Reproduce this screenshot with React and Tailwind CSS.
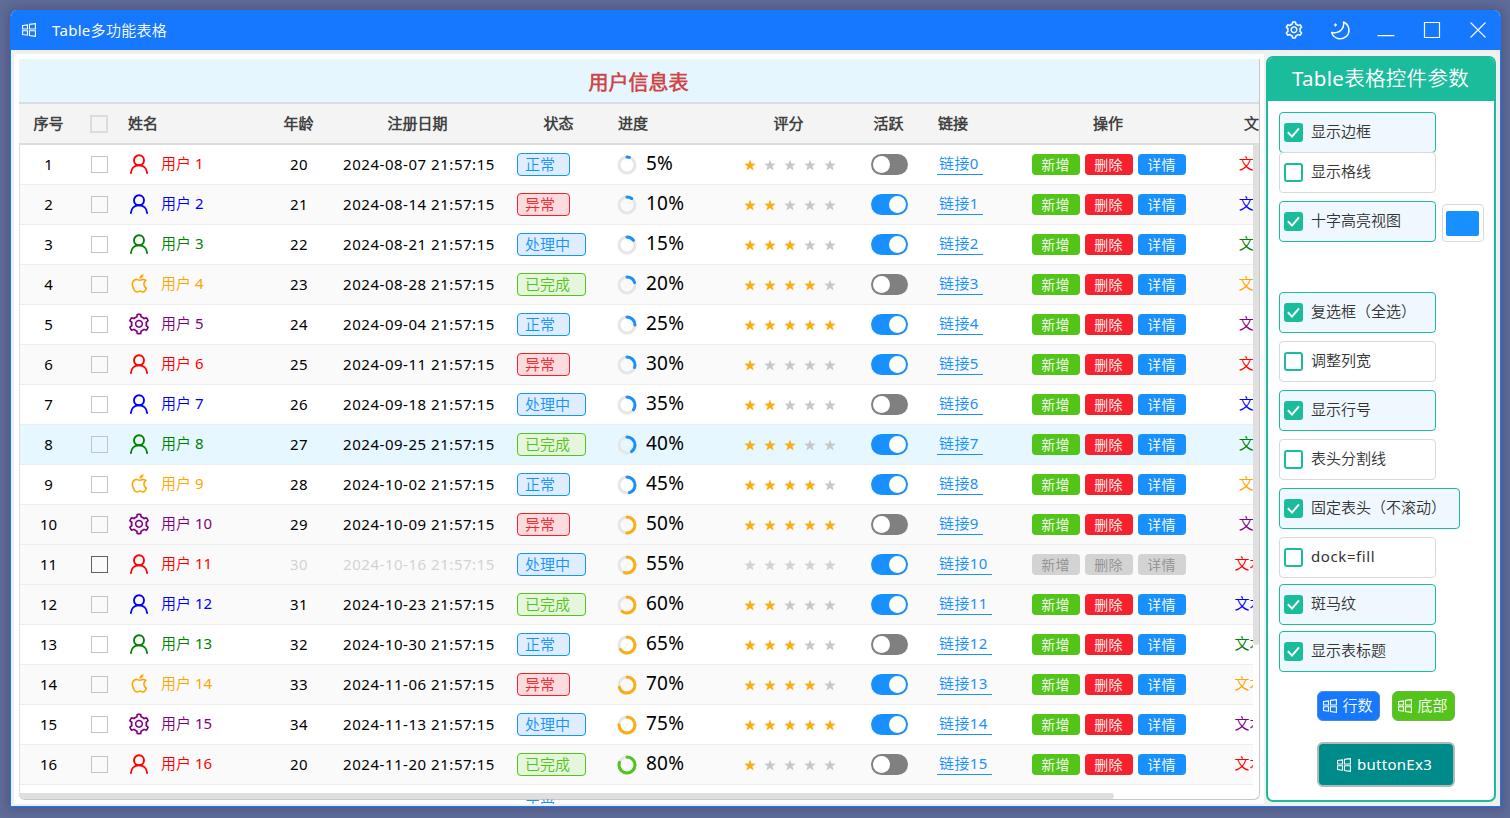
import React from 'react';
import { AiOutlineApple, AiOutlineSetting } from 'react-icons/ai';

const USER_COLORS = ['text-[#ff0000]', 'text-[#0000ff]', 'text-[#008000]', 'text-[#ffa500]', 'text-[#800080]'];

const STATUSES = [
  { label: '正常', style: 'w-[53px] border-[#1890ff] bg-[#dceeff] text-[#1890ff]' },
  { label: '异常', style: 'w-[53px] border-[#f5222d] bg-[#fddcde] text-[#f5222d]' },
  { label: '处理中', style: 'w-[69px] border-[#1890ff] bg-[#dceeff] text-[#1890ff]' },
  { label: '已完成', style: 'w-[69px] border-[#52c41a] bg-[#e5f6dc] text-[#52c41a]' },
];

const DATES = [
  '2024-08-07', '2024-08-14', '2024-08-21', '2024-08-28', '2024-09-04', '2024-09-11',
  '2024-09-18', '2024-09-25', '2024-10-02', '2024-10-09', '2024-10-16', '2024-10-23',
  '2024-10-30', '2024-11-06', '2024-11-13', '2024-11-20',
];

const ROWS = DATES.map((date, i) => ({
  id: i + 1,
  age: 20 + (i % 15),
  date: `${date} 21:57:15`,
  status: STATUSES[i % 4],
  progress: (i + 1) * 5,
  stars: i === 10 ? 0 : (i % 5) + 1,
  active: i % 3 !== 0,
  color: USER_COLORS[i % 5],
  disabled: i === 10,
  hovered: i === 7,
}));

const GRID =
  'grid w-[1290px] grid-cols-[60px_40px_150px_60px_180px_100px_120px_120px_80px_80px_200px_100px] items-center';

const UserIcon = () => (
  <svg className="-mt-[2px]" width="20" height="20" viewBox="0 0 20 20" fill="none" stroke="currentColor" strokeWidth="1.900" strokeLinecap="round">
    <circle cx="10" cy="6.300" r="5" />
    <path d="M1.900 19c.300-4.600 3.600-7.700 8.100-7.700s7.800 3.100 8.100 7.700" />
  </svg>
);

const WindowsIcon = () => (
  <svg width="14" height="14" viewBox="0 0 14 14" fill="none" stroke="currentColor" strokeWidth="1.100">
    <path d="M.6 2.500 5.500 1.900V6H.6zM7.500 1.400 13.400.6V6H7.500zM.6 7.800H5.500V12.200L.6 11.600zM7.500 7.800H13.400V13.400L7.500 12.600z" />
  </svg>
);

const MoonIcon = () => (
  <svg width="20" height="20" viewBox="0 0 20 20" fill="none" stroke="currentColor" strokeWidth="1.500" strokeLinejoin="round" strokeLinecap="round">
    <path d="M13.500 2C19.500 4.500 20.800 12.500 16 16.700 11.200 20.700 3.500 18.800 1.600 12.400 4 13.400 8.500 12.700 11 10.200 13.500 7.700 14 4.500 13.500 2z" />
    <path d="M5.500 3.900v2M4.500 4.900h2" strokeWidth="1.300" />
  </svg>
);

const RowIcon = ({ index }) => {
  const kind = index % 5;
  if (kind === 3) return <AiOutlineApple size={23} stroke="currentColor" strokeWidth={5} className="-mt-[2px] shrink-0" />;
  if (kind === 4) return <AiOutlineSetting size={24} className="-mx-[2px] -mt-px shrink-0" />;
  return <UserIcon />;
};

const Progress = ({ value }) => {
  const length = 2 * Math.PI * 8;
  const color = value >= 80 ? '#52c41a' : value >= 50 ? '#faad14' : '#1890ff';
  return (
    <div className="flex items-center pl-2">
      <svg width="20" height="20" viewBox="0 0 20 20" fill="none" strokeWidth="3">
        <circle cx="10" cy="10" r="8" stroke="#e6e6e6" />
        <circle
          cx="10"
          cy="10"
          r="8"
          stroke={color}
          strokeLinecap="round"
          strokeDasharray={`${(length * value) / 100} ${length}`}
          transform="rotate(-90 10 10)"
        />
      </svg>
      <span className="-mt-[3px] ml-[9px] text-[19px] leading-6 tracking-[0.2px]">{value}%</span>
    </div>
  );
};

const Stars = ({ count, disabled }) => (
  <div className="flex justify-center gap-[8px] pl-px">
    {[1, 2, 3, 4, 5].map((n) => (
      <svg key={n} width="12" height="12" viewBox="0 0 24 24" fill={n <= count ? '#faad14' : disabled ? '#d3d3d3' : '#c8c8c8'}>
        <path d="M12 1l3 8 8.500.3-6.700 5.300L19.200 23 12 18.200 4.800 23l2.400-8.400L.5 9.300 9 9z" />
      </svg>
    ))}
  </div>
);

const Toggle = ({ on }) => (
  <div className={`ml-[22px] flex h-[21px] w-[37px] items-center rounded-full px-[2px] ${on ? 'justify-end bg-[#1890ff]' : 'bg-[#808080]'}`}>
    <div className="size-[17px] rounded-full bg-white" />
  </div>
);

const Checkbox = ({ className }) => <div className={`mx-auto border ${className}`} />;

const ActionButton = ({ label, color }) => (
  <button className={`h-[21px] w-12 rounded-[4px] pr-px pt-px text-sm leading-[20px] tracking-[0.3px] ${color}`}>{label}</button>
);

const HeaderRow = () => (
  <div className={`${GRID} h-[41px] border-b-2 border-[#dcdcdc] bg-[#f4f4f4] text-center font-bold text-[#404040]`}>
    <span className="pr-px">序号</span>
    <Checkbox className="size-[18px] border-2 border-[#dcdcdc]" />
    <span className="pl-[9px] text-left">姓名</span>
    <span className="pr-px">年龄</span>
    <span className="pr-[3px]">注册日期</span>
    <span className="pr-px">状态</span>
    <span className="pl-[9px] text-left">进度</span>
    <span className="pr-px">评分</span>
    <span className="pr-px">活跃</span>
    <span className="pl-[9px] text-left">链接</span>
    <span className="pr-[2px]">操作</span>
    <span>文本</span>
  </div>
);

const TableRow = ({ row, index }) => {
  const background = row.hovered ? 'bg-[#e6f7ff]' : row.disabled || index % 2 ? 'bg-[#fafafa]' : 'bg-white';
  const muted = row.disabled ? 'text-[#d3d3d3]' : '';
  return (
    <div className={`${GRID} h-10 border-b border-[#ededed] text-center text-black ${background}`}>
      <span className="pr-px">{row.id}</span>
      <Checkbox className={`size-[17px] ${row.disabled ? 'border-[#606060]' : 'border-[#c4c4c4]'}`} />
      <div className={`flex items-center pl-[9px] ${row.color}`}>
        <span className="flex w-[22px] justify-center">
          <RowIcon index={index} />
        </span>
        <span className="-mt-[2px] ml-[11px]">用户 {row.id}</span>
      </div>
      <span className={`tracking-[0.3px] ${muted}`}>{row.age}</span>
      <span className={`tracking-[0.53px] whitespace-nowrap ${muted}`}>{row.date}</span>
      <div className={`ml-2 h-[23px] rounded-[4px] border pl-[7px] text-left leading-[21px] ${row.status.style}`}>
        {row.status.label}
      </div>
      <Progress value={row.progress} />
      <Stars count={row.stars} disabled={row.disabled} />
      <Toggle on={row.active} />
      <div className="flex pl-2 text-left">
        <span className="-mt-px block h-[21px] border-b border-[#1890ff] pr-[4px] pl-[2px] leading-[18px] tracking-[0.4px] text-[#1890ff]">
          链接{index}
        </span>
      </div>
      <div className={`flex gap-[5px] pl-[23px] ${row.disabled ? 'text-[#909090]' : 'text-white'}`}>
        <ActionButton label="新增" color={row.disabled ? 'bg-[#d3d3d3]' : 'bg-[#52c41a]'} />
        <ActionButton label="删除" color={row.disabled ? 'bg-[#d3d3d3]' : 'bg-[#f5222d]'} />
        <ActionButton label="详情" color={row.disabled ? 'bg-[#d3d3d3]' : 'bg-[#1890ff]'} />
      </div>
      <span className={`-mt-[2px] pr-[2px] ${row.color}`}>文本{index}</span>
    </div>
  );
};

const UserTable = () => (
  <div className="relative h-[750px] w-[1250px] bg-white pt-[5px] pl-[5px]">
    <div className="h-[741px] w-[1241px] overflow-hidden rounded-b-[6px] border-r border-b border-[#c8c8c8]">
      <h1 className="h-[45px] border-b-2 border-[#d6dde4] bg-[#e6f6ff] pr-px text-center text-xl leading-[47px] font-bold text-[#d04545]">
        用户信息表
      </h1>
      <HeaderRow />
      <div className="relative h-[654px]">
        <div className="h-full w-[1234px] overflow-hidden">
          {ROWS.map((row, i) => (
            <TableRow key={row.id} row={row} index={i} />
          ))}
        </div>
        <div className="absolute top-0 left-0 h-full w-px bg-[#dedede]" />
        <div className="absolute top-0 right-0 h-[500px] w-[6px] rounded-b-[3px] bg-[#dfdfdf]" />
        <div className="absolute bottom-0 left-0 h-[6px] w-[1095px] rounded-r-[3px] bg-[#dfdfdf]" />
      </div>
    </div>
    {/* the next row's label shows through under the scroll bar */}
    <div className="absolute top-[745px] left-[511px] flex h-[5px] items-end overflow-hidden text-[#1890ff]">
      <span className="-mb-[13px] leading-[21px]">正常</span>
    </div>
  </div>
);

const Option = ({ label, checked, className = '' }) => (
  <label
    className={`flex h-[41px] shrink-0 items-center rounded-[4px] border pl-1 ${
      checked ? 'border-[#1abc9c] bg-[#f0f8ff]' : 'border-[#d9d9d9] bg-white'
    } ${className || 'w-[157px]'}`}
  >
    <span className={`flex size-[19px] items-center justify-center rounded-[3px] border-2 border-[#1abc9c] ${checked ? 'bg-[#1abc9c]' : 'bg-white'}`}>
      {checked && (
        <svg width="15" height="15" viewBox="0 0 15 15" fill="none" stroke="white" strokeWidth="2">
          <path d="M1.900 7.300 6 11.600 13 3.300" />
        </svg>
      )}
    </span>
    <span className="-mt-[3px] ml-[8px] text-[#333333]">{label}</span>
  </label>
);

const SettingsPanel = () => (
  <aside className="mt-[2px] ml-[2px] h-[746px] w-[230px] overflow-hidden rounded-[7px] border-2 border-[#1abc9c] bg-white">
    <h2 className="h-[43px] bg-[#1abc9c] pr-px text-center text-[20.500px] leading-[40px] tracking-[0.3px] text-white">
      Table表格控件参数
    </h2>
    <div className="flex flex-col pt-[11px] pl-[11px]">
      <Option label="显示边框" checked />
      <Option label="显示格线" className="-mt-px w-[157px]" />
      <div className="mt-[8px] flex items-center gap-[6px]">
        <Option label="十字高亮视图" checked />
        <div className="mt-[3px] flex h-[38px] w-[42px] items-center justify-center rounded-[4px] border border-[#d9d9d9] pr-px">
          <div className="h-[25px] w-[33px] rounded-[2px] bg-[#1890ff]" />
        </div>
      </div>
      <div className="mt-[50px] flex flex-col gap-[8px]">
        <Option label="复选框（全选）" checked />
        <Option label="调整列宽" />
        <Option label="显示行号" checked />
        <Option label="表头分割线" />
        <Option label="固定表头（不滚动）" checked className="w-[181px]" />
        <Option label="dock=fill" className="w-[157px] tracking-[0.6px]" />
      </div>
      <div className="mt-[6px] flex flex-col gap-[6px]">
        <Option label="斑马纹" checked />
        <Option label="显示表标题" checked />
      </div>
      <div className="mt-[19px] ml-[38px] flex gap-3 text-white">
        <button className="flex h-[30px] w-[63px] items-center justify-center gap-[5px] rounded-[6px] border border-[#4d87d6] bg-[#1677ff] pr-px">
          <WindowsIcon />
          <span className="-mt-px">行数</span>
        </button>
        <button className="flex h-[30px] w-[63px] items-center justify-center gap-[5px] rounded-[6px] border border-[#6fb54a] bg-[#52c41a] pr-px">
          <WindowsIcon />
          <span className="-mt-px">底部</span>
        </button>
      </div>
      <button className="mt-[21px] ml-[38px] flex h-[45px] w-[138px] items-center justify-center gap-[6px] rounded-[6px] border-2 border-[#b0b8b8] bg-[#008b8b] pr-[3px] text-white">
        <WindowsIcon />
        <span className="tracking-[0.3px]">buttonEx3</span>
      </button>
    </div>
  </aside>
);

const TitleBar = () => (
  <header className="flex h-10 items-center bg-[#1677ff] pl-[11px] text-white">
    <WindowsIcon />
    <span className="ml-4 tracking-[0.3px]">Table多功能表格</span>
    <div className="ml-auto flex items-center gap-[26px] pr-[12px]">
      <AiOutlineSetting size={20} stroke="currentColor" strokeWidth={8} />
      <MoonIcon />
      <svg width="20" height="20" viewBox="0 0 20 20" stroke="currentColor" strokeWidth="1.200">
        <path d="M1.500 15.700h17" />
      </svg>
      <svg width="20" height="20" viewBox="0 0 20 20" fill="none" stroke="currentColor" strokeWidth="1.200">
        <path d="M2.500 2.500h15v15h-15z" />
      </svg>
      <svg width="20" height="20" viewBox="0 0 20 20" stroke="currentColor" strokeWidth="1.100">
        <path d="M2.500 2.500l15 15M17.500 2.500l-15 15" />
      </svg>
    </div>
  </header>
);

const App = () => (
  <div className="h-[818px] w-[1510px] overflow-hidden bg-[#5f6b98] pt-[10px] pl-[10px] font-['Noto_Sans','Noto_Sans_CJK_SC_DemiLight','Noto_Sans_CJK_SC',sans-serif] text-[15px]">
    <div className="h-[797px] w-[1491px] overflow-hidden rounded-t-[7px] border-x border-b border-[#1677ff] bg-[#f0f0f0] shadow-[0_0_8px_3px_rgba(40,40,70,0.25)]">
      <TitleBar />
      <main className="flex pt-1 pl-[3px]">
        <UserTable />
        <SettingsPanel />
      </main>
    </div>
  </div>
);

export default App;
